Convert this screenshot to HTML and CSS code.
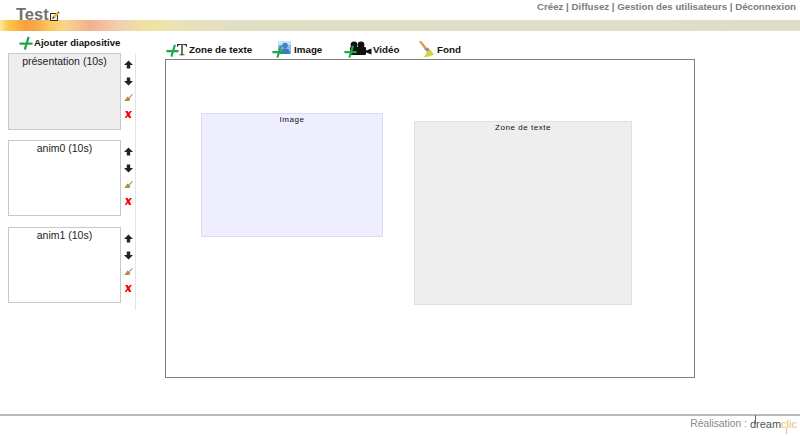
FILE: index.html
```html
<!DOCTYPE html>
<html lang="fr">
<head>
<meta charset="utf-8">
<title>Test</title>
<link rel="stylesheet" href="styles.css">
</head>
<body>
<svg class="defs" width="0" height="0" aria-hidden="true">
  <defs>
    <symbol id="plus" viewBox="0 0 16 16"><path d="M0.5 8.7 H15.5 M11 1 L6.6 15.5" fill="none" stroke="#1fa84a" stroke-width="2.6"/></symbol>
    <symbol id="up" viewBox="0 0 9 9"><path d="M4.5 0.5 L9 5 L6.2 5 L6.2 8.5 L2.8 8.5 L2.8 5 L0 5 Z" fill="#222"/></symbol>
    <symbol id="down" viewBox="0 0 9 9"><path d="M4.5 8.5 L9 4 L6.2 4 L6.2 0.5 L2.8 0.5 L2.8 4 L0 4 Z" fill="#222"/></symbol>
    <symbol id="brush" viewBox="0 0 9 9"><path d="M0.3 8 L3.5 3.5 L6.2 5.3 L5.5 8 Z" fill="#b0903c"/><path d="M5 4 L8.5 0.8 L8.9 1.5 L6 5 Z" fill="#9a9a90"/></symbol>
    <symbol id="cross" viewBox="0 0 9 9"><path d="M1.2 1 L3.6 1 L4.7 2.8 L6 1 L8 1 L5.6 4.3 L7.4 8 L5 8 L3.9 5.9 L2.4 8 L0.6 8 L3 4.6 Z" fill="#f00"/></symbol>
  </defs>
</svg>

<header class="top">
  <div class="top-row">
    <h1 class="title">Test<svg class="title-icon" viewBox="0 0 10 10" width="10" height="10"><rect x="0.5" y="2.5" width="7" height="7" fill="#f6f2dc" stroke="#333" stroke-width="1"/><path d="M2.2 7.8 L3 5.4 L7.4 1 L9 2.6 L4.6 7 Z" fill="#eab52c"/><path d="M7.4 1 L8.2 0.2 L9.8 1.8 L9 2.6 Z" fill="#d81f1f"/><path d="M2.2 7.8 L3 5.4 L4.6 7 Z" fill="#222"/></svg></h1>
    <nav class="menu">Créez | Diffusez | Gestion des utilisateurs | Déconnexion</nav>
  </div>
  <div class="band"></div>
</header>

<main class="main">
  <aside class="side">
    <div class="add"><svg class="add-icon"><use href="#plus"/></svg>Ajouter diapositive</div>
    <div class="slides">
      <div class="slide-row">
        <div class="slide active">présentation (10s)</div>
        <div class="tools"><svg><use href="#up"/></svg><svg><use href="#down"/></svg><svg><use href="#brush"/></svg><svg><use href="#cross"/></svg></div>
      </div>
      <div class="slide-row">
        <div class="slide">anim0 (10s)</div>
        <div class="tools"><svg><use href="#up"/></svg><svg><use href="#down"/></svg><svg><use href="#brush"/></svg><svg><use href="#cross"/></svg></div>
      </div>
      <div class="slide-row">
        <div class="slide">anim1 (10s)</div>
        <div class="tools"><svg><use href="#up"/></svg><svg><use href="#down"/></svg><svg><use href="#brush"/></svg><svg><use href="#cross"/></svg></div>
      </div>
    </div>
  </aside>

  <section class="editor">
    <div class="toolbar">
      <div class="tool tool-text">
        <svg class="tool-icon" width="23" height="16" viewBox="0 0 23 16"><path d="M12 3 H22 V6 H21.6 Q21 3.8 18.2 3.8 H17.7 V13 Q17.7 13.6 19.5 13.6 V14.2 H14.5 V13.6 Q16.3 13.6 16.3 13 V3.8 H15.8 Q13 3.8 12.4 6 H12 Z" fill="#333"/><use href="#plus" width="13" height="13" x="1" y="3"/></svg>
        Zone de texte
      </div>
      <div class="tool tool-image">
        <svg class="tool-icon" width="21" height="18" viewBox="0 0 21 18"><rect x="6" y="1" width="13" height="13" fill="#8dbcea"/><rect x="6" y="1" width="13" height="4" fill="#cfe3f7"/><circle cx="13" cy="5.5" r="2.8" fill="#3f80c8"/><path d="M8 14 Q8 8.5 13 8.5 Q18 8.5 18 14 Z" fill="#3a78c0"/><use href="#plus" width="13" height="13" x="0" y="5"/></svg>
        Image
      </div>
      <div class="tool tool-video">
        <svg class="tool-icon" width="28" height="18" viewBox="0 0 28 18"><circle cx="10" cy="5" r="3.4" fill="#111"/><circle cx="17" cy="5" r="3.4" fill="#111"/><rect x="6" y="7" width="16" height="8" rx="1" fill="#111"/><path d="M22 10.5 L27.5 8.5 V14.5 L22 12.5 Z" fill="#111"/><use href="#plus" width="13" height="13" x="0" y="5"/></svg>
        Vidéo
      </div>
      <div class="tool tool-bg">
        <svg class="tool-icon" width="17" height="18" viewBox="0 0 17 18"><path d="M1 1.5 L3 0.8 L8.8 7.8 L6.8 9.5 Z" fill="#d89a4c"/><path d="M6.3 9 L9.5 7.5 L12 10 L8.8 11.5 Z" fill="#888"/><path d="M8.5 11.5 L12.5 9.8 L16 14.5 Q11 17.5 5 17 Q8.3 15 8.5 11.5 Z" fill="#d8d040"/></svg>
        Fond
      </div>
    </div>
    <div class="canvas">
      <div class="block block-image">Image</div>
      <div class="block block-text">Zone de texte</div>
    </div>
  </section>
</main>

<footer class="foot">
  <span class="credit">Réalisation :</span>
  <span class="logo"><span class="logo-dark">dream</span><span class="logo-light">clic</span></span>
</footer>
</body>
</html>
```
FILE: styles.css
```css
* { box-sizing: border-box; }
html, body { margin: 0; padding: 0; }
body {
  width: 800px;
  height: 436px;
  background: #fff;
  font-family: "Liberation Sans", Arial, sans-serif;
  color: #111;
  overflow: hidden;
  display: flex;
  flex-direction: column;
}
.defs { position: absolute; }

.top-row {
  height: 20px;
  display: flex;
  justify-content: space-between;
  padding: 0 4px 0 16px;
}
.title {
  margin: 0;
  font-size: 16.5px;
  line-height: 20px;
  height: 20px;
  padding-top: 4px;
  font-weight: bold;
  color: #707070;
  display: flex;
  align-items: flex-start;
}
.title-icon { margin: 7px 0 0 1px; }
.menu {
  font-size: 9.7px;
  font-weight: bold;
  color: #7c7c7c;
  line-height: 12px;
  padding-top: 1px;
}
.band {
  height: 11px;
  background: linear-gradient(90deg, #fde7a0 0, #fbc94a 8px, #f9a040 25px, #f9a848 36px, #fbc860 50px, #f7d58c 65px, #f3b090 90px, #f4bb9c 100px, #f2d0b0 120px, #efe3a0 148px, #e8e2b8 180px, #e2dec6 230px, #e0dcc6 100%);
}

.main {
  display: flex;
  flex: 1;
  min-height: 0;
}
.side {
  width: 136px;
  margin-left: 8px;
  flex: none;
  height: 279px;
}
.add {
  height: 22px;
  display: flex;
  align-items: center;
  padding-left: 11px;
  font-size: 9.6px;
  font-weight: bold;
  color: #111;
  white-space: nowrap;
}
.add-icon { width: 14px; height: 14px; margin: 2px 1px 0 0; }
.slides {
  border-right: 1px solid #e4e4e4;
  width: 128px;
  height: 257px;
  display: flex;
  flex-direction: column;
  gap: 11px;
}
.slide-row { display: flex; height: 76px; }
.slide {
  width: 113px;
  height: 76px;
  flex: none;
  border: 1px solid #c8c8c8;
  text-align: center;
  font-size: 10.5px;
  line-height: 12px;
  padding-top: 1px;
  color: #222;
}
.slide.active { background: #eeeeee; height: 77px; }
.tools {
  display: flex;
  flex-direction: column;
  gap: 7.5px;
  padding: 7px 0 0 3px;
}
.tools svg { width: 9px; height: 9px; display: block; }

.editor {
  margin-left: 21px;
  width: 530px;
  display: flex;
  flex-direction: column;
}
.toolbar {
  height: 28px;
  display: flex;
  align-items: flex-end;
  font-size: 9.8px;
  font-weight: bold;
  white-space: nowrap;
}
.tool { display: flex; align-items: center; height: 20px; }
.tool-icon { margin-right: 1px; flex: none; }
.tool-text { width: 107px; }
.tool-image { width: 72px; }
.tool-video { width: 74px; }
.tool-bg .tool-icon { margin-right: 2px; }
.canvas {
  position: relative;
  width: 530px;
  height: 319px;
  border: 1px solid #808080;
}
.block {
  position: absolute;
  font-size: 8px;
  letter-spacing: 0.55px;
  line-height: 10px;
  padding-top: 1px;
  text-align: center;
  color: #111;
}
.block-image {
  left: 35px;
  top: 53px;
  width: 182px;
  height: 124px;
  background: #eeeeff;
  border: 1px solid #dcdcf0;
}
.block-text {
  left: 248px;
  top: 61px;
  width: 218px;
  height: 184px;
  background: #eeeeee;
  border: 1px solid #e0e0e0;
}

.foot {
  border-top: 2px solid #bbb;
  height: 22px;
  display: flex;
  justify-content: flex-end;
  align-items: flex-start;
  padding: 2px 3px 0 0;
}
.credit { font-size: 10.3px; line-height: 12px; color: #888; margin-right: 3px; }
.logo { position: relative; display: block; font-size: 11px; line-height: 13px; }
.logo-dark { color: #555; }
.logo-light { color: #f0b870; }
.logo::before {
  content: "";
  position: absolute;
  left: 5px;
  top: -3px;
  width: 1px;
  height: 9px;
  background: #666;
}
.logo::after {
  content: "";
  position: absolute;
  left: 36px;
  top: 10px;
  width: 1px;
  height: 6px;
  background: #f0b870;
}
```
